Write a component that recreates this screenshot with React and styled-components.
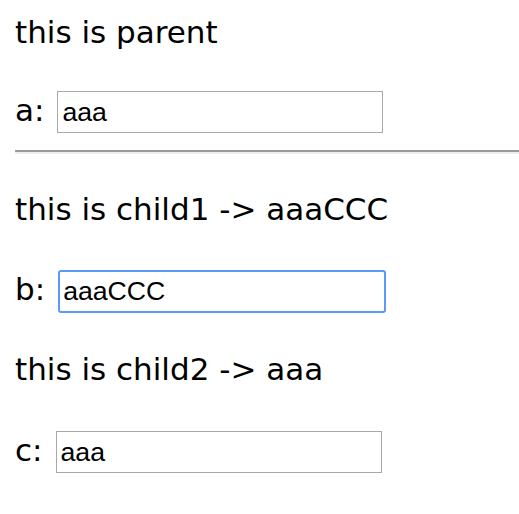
import React from "react";
import styled, { createGlobalStyle } from "styled-components";

const Global = createGlobalStyle`
  html, body { margin: 0; padding: 0; background: #fff; }
  body { font-family: "DejaVu Sans", Verdana, sans-serif; color: #000; }
`;

const Page = styled.div`
  display: flex;
  flex-direction: column;
  padding: 8px 0 0 15px;
`;

const Title = styled.div`
  font-size: 31px;
  line-height: 48px;
  height: 48px;
  margin-top: ${(p) => p.$mt || 0}px;
  white-space: nowrap;
`;

const Row = styled.div`
  display: flex;
  align-items: baseline;
  gap: ${(p) => p.$gap || 13}px;
  margin-top: ${(p) => p.$mt || 0}px;
  font-size: 31px;
`;

const Label = styled.span`
  font-size: 31px;
  white-space: nowrap;
`;

const Field = styled.input`
  box-sizing: border-box;
  width: ${(p) => (p.$focused ? 328 : 326)}px;
  height: ${(p) => (p.$focused ? 43 : 42)}px;
  margin: 0;
  padding: 0 ${(p) => (p.$focused ? 3 : 4)}px;
  border: ${(p) => (p.$focused ? "2px solid #5b9bf7" : "1px solid #a9a9a9")};
  border-radius: ${(p) => (p.$focused ? 3 : 0)}px;
  font-family: "Liberation Sans", Arial, sans-serif;
  font-size: 26.67px;
  color: #000;
  background: #fff;
  outline: none;
`;

const Rule = styled.hr`
  margin: 17px 0 0 0;
  height: 0;
  border: none;
  border-top: 2px solid #9a9a9a;
  border-bottom: 2px solid #eeeeee;
`;

export default function App() {
  return (
    <>
      <Global />
      <Page>
        <Title>this is parent</Title>
        <Row $mt={35}>
          <Label>a:</Label>
          <Field defaultValue="aaa" readOnly />
        </Row>
        <Rule />
        <Title $mt={31}>this is child1 -&gt; aaaCCC</Title>
        <Row $mt={37}>
          <Label>b:</Label>
          <Field $focused defaultValue="aaaCCC" readOnly />
        </Row>
        <Title $mt={32}>this is child2 -&gt; aaa</Title>
        <Row $mt={38}>
          <Label>c:</Label>
          <Field defaultValue="aaa" readOnly />
        </Row>
      </Page>
    </>
  );
}
